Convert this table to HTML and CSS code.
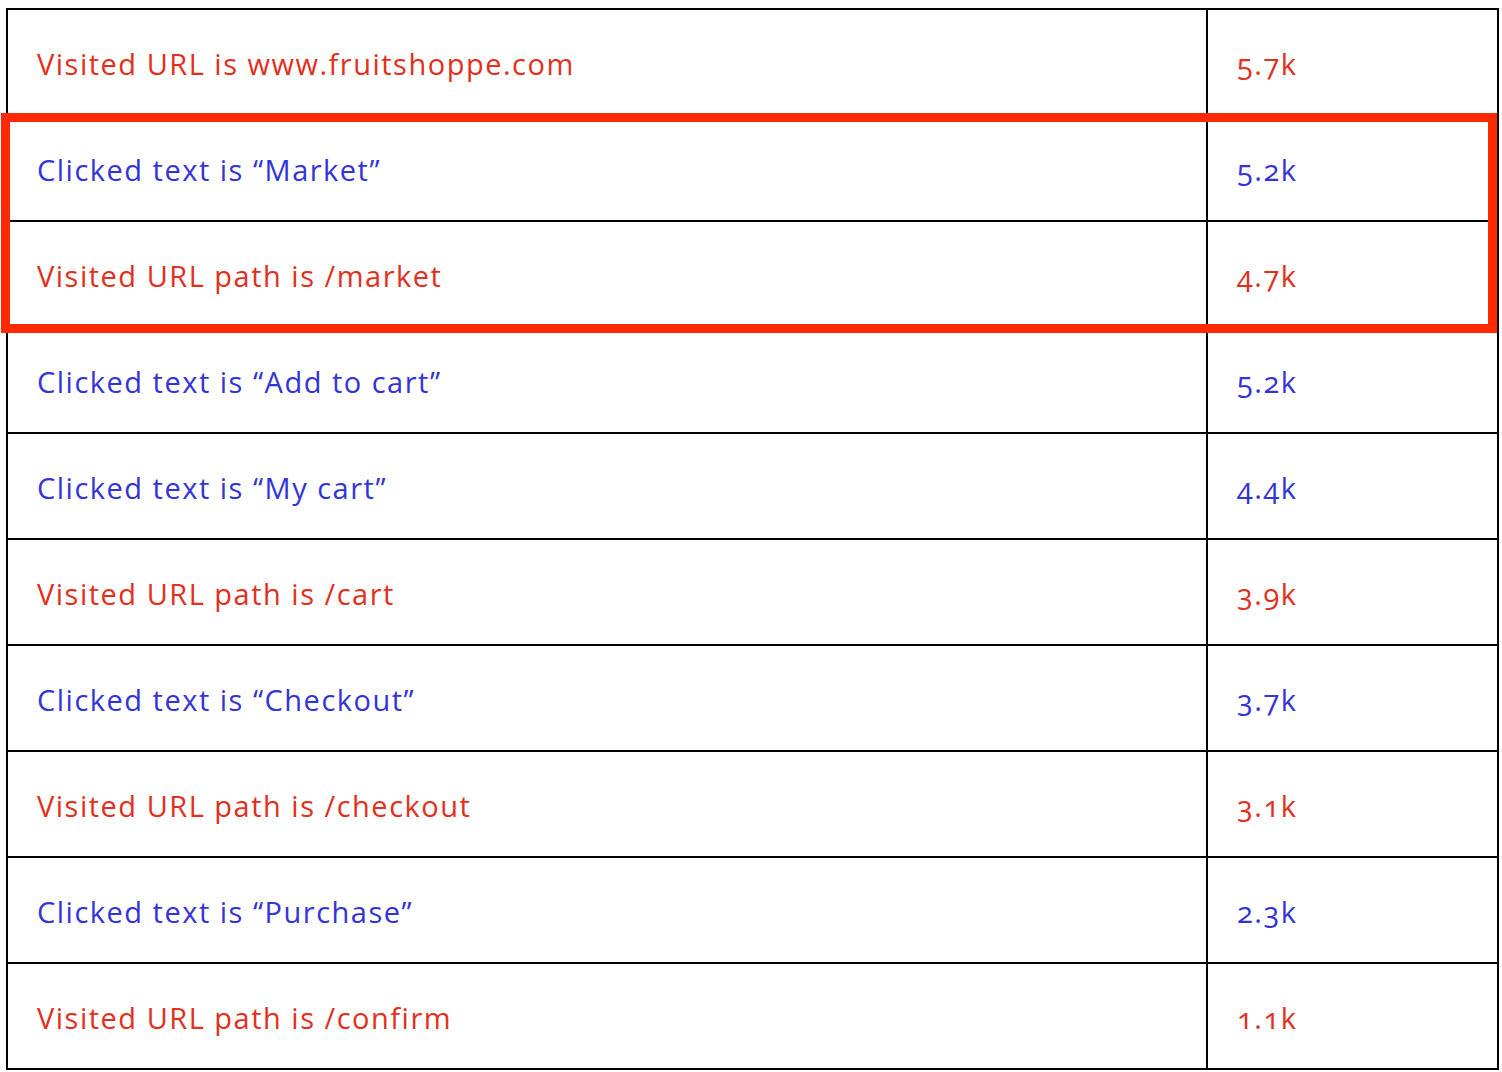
FILE: index.html
```html
<!DOCTYPE html>
<html lang="en">
<head>
<meta charset="utf-8">
<title>Funnel steps</title>
<link rel="stylesheet" href="styles.css">
</head>
<body>
<div class="wrap">
  <div class="table">
    <div class="row"><div class="cell label red">Visited URL is www.fruitshoppe.com</div><div class="cell num red">5.7k</div></div>
    <div class="row"><div class="cell label blue">Clicked text is “Market”</div><div class="cell num blue">5.2k</div></div>
    <div class="row"><div class="cell label red">Visited URL path is /market</div><div class="cell num red">4.7k</div></div>
    <div class="row"><div class="cell label blue">Clicked text is “Add to cart”</div><div class="cell num blue">5.2k</div></div>
    <div class="row"><div class="cell label blue">Clicked text is “My cart”</div><div class="cell num blue">4.4k</div></div>
    <div class="row"><div class="cell label red">Visited URL path is /cart</div><div class="cell num red">3.9k</div></div>
    <div class="row"><div class="cell label blue">Clicked text is “Checkout”</div><div class="cell num blue">3.7k</div></div>
    <div class="row"><div class="cell label red">Visited URL path is /checkout</div><div class="cell num red">3.1k</div></div>
    <div class="row"><div class="cell label blue">Clicked text is “Purchase”</div><div class="cell num blue">2.3k</div></div>
    <div class="row"><div class="cell label red">Visited URL path is /confirm</div><div class="cell num red">1.1k</div></div>
  </div>
  <div class="highlight"></div>
</div>
</body>
</html>
```
FILE: styles.css
```css
html, body {
  margin: 0;
  padding: 0;
  background: #ffffff;
}
body {
  font-family: "Open Sans", "Noto Sans", sans-serif;
  font-size: 29px;
  letter-spacing: 1.5px;
  font-feature-settings: "onum" 1;
}
.wrap {
  position: relative;
  margin: 8px 0 0 6px;
  width: 1493px;
}
.table {
  border: 2px solid #000;
}
.row {
  display: grid;
  grid-template-columns: 1198px 1fr;
  height: 104px;
  border-bottom: 2px solid #000;
}
.row:last-child {
  border-bottom: none;
}
.cell {
  display: flex;
  align-items: center;
  padding-top: 3px;
  line-height: 1;
  white-space: nowrap;
}
.label {
  padding-left: 29px;
}
.num {
  border-left: 2px solid #000;
  padding-left: 29px;
}
.red { color: #e2301c; }
.blue { color: #3334d8; }
.highlight {
  position: absolute;
  left: -5px;
  top: 105px;
  width: 1478px;
  height: 202px;
  border: 9px solid #ff2a00;
  pointer-events: none;
}
```
